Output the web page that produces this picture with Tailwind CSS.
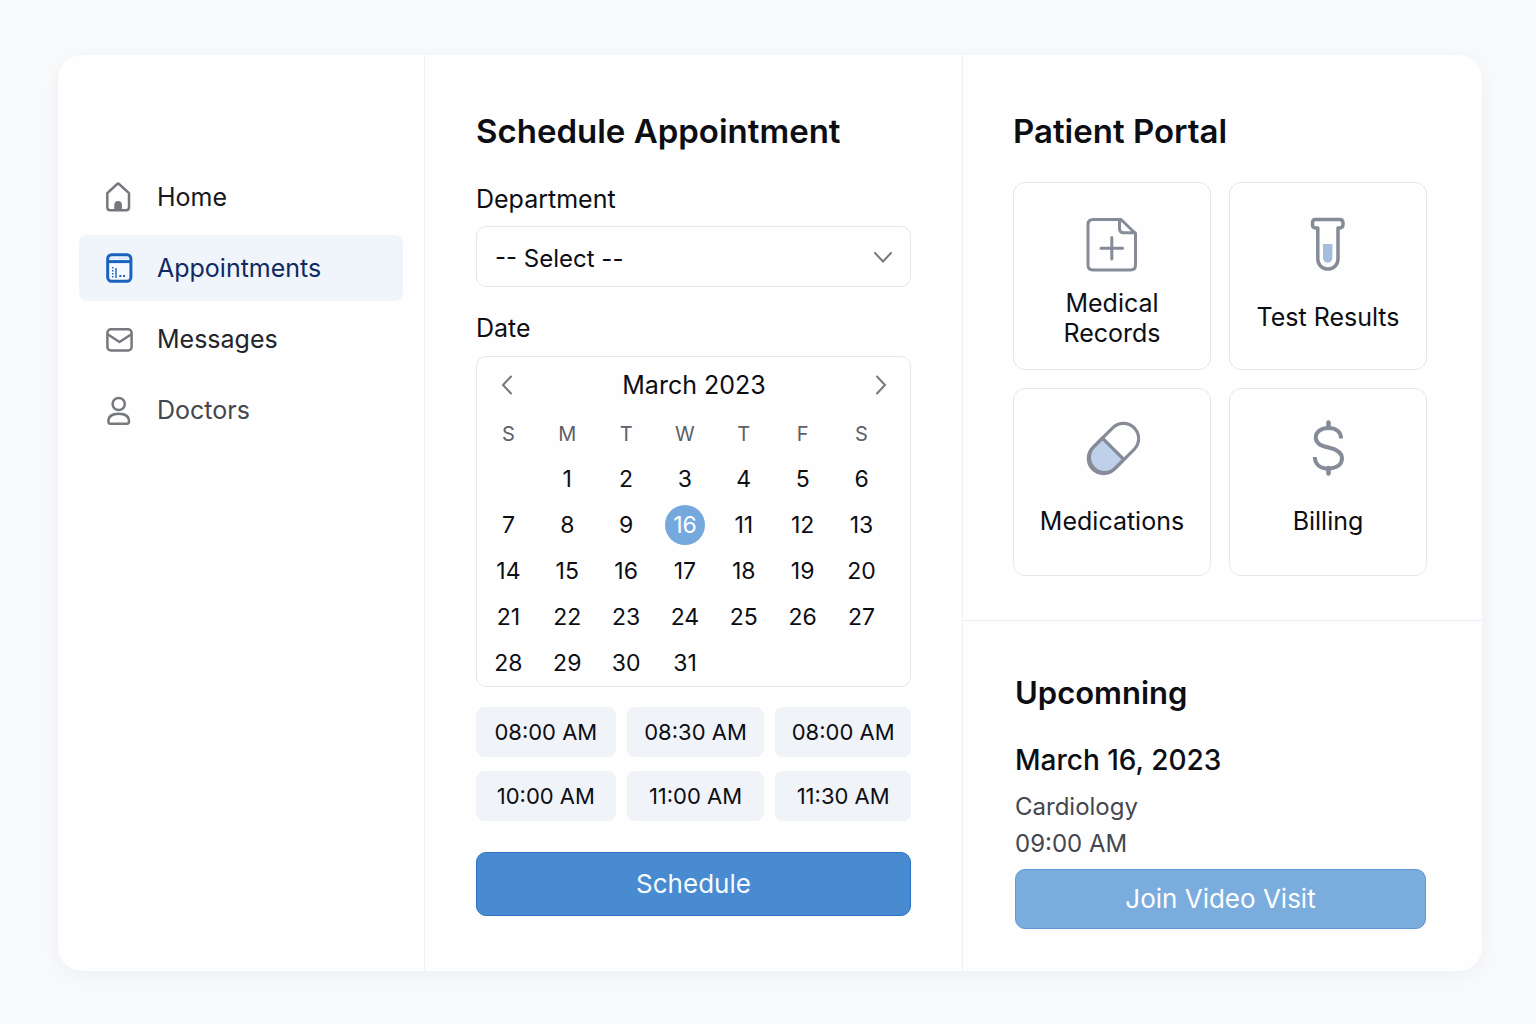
<!DOCTYPE html>
<html lang="en">
<head>
<meta charset="utf-8">
<meta name="viewport" content="width=device-width, initial-scale=1">
<title>Patient Portal</title>
<script src="https://cdn.jsdelivr.net/npm/@tailwindcss/browser@4"></script>
</head>
<body class="min-h-screen bg-[#f8fafc] pt-[55px] pr-[54px] pb-[53px] pl-[58px] font-['Inter',sans-serif] text-[25px] leading-8 text-[#0c0e14]">
<div class="grid rounded-3xl bg-[#fefefe] shadow-[0_4px_24px_rgba(15,35,60,0.05)] lg:grid-cols-[366fr_538fr_520fr]">

  <!-- Sidebar -->
  <nav aria-label="Main" class="flex flex-col gap-[5px] px-[21px] pt-[109px] pb-10">
    <a href="#" class="flex h-[66px] items-center gap-6 rounded-lg pl-[26px] text-[#16181d]">
      <svg class="h-[30px] w-7" viewBox="0 0 28 30" fill="none" stroke="#75787d" stroke-width="2.500" stroke-linejoin="round" aria-hidden="true"><path d="M2.300 11.200 12.200 2 Q13.100 1.200 14 2 L24 11.200 V25.300 Q24 28.300 21 28.300 H5.300 Q2.300 28.300 2.300 25.300 Z"/><path d="M9.300 28 V22.800 a3.800 3.800 0 0 1 7.600 0 V28 Z" fill="#75787d" stroke="none"/></svg>
      Home
    </a>
    <a href="#" aria-current="page" class="flex h-[66px] items-center gap-6 rounded-lg bg-[#f0f4fb] pl-[26px] text-[#0f2a63]">
      <svg class="h-[30px] w-7" viewBox="-1 0 28 30" fill="none" aria-hidden="true"><rect x="1.700" y="1.700" width="23.200" height="26.600" rx="4" fill="#f6f9fe" stroke="#1a62bd" stroke-width="3"/><path d="M2 8.600H25" stroke="#1a62bd" stroke-width="3"/><path d="M4.500 5.300H9.500M12 5.300H22" stroke="#dce9fa" stroke-width="2"/><path d="M6.700 14V25" stroke="#1a62bd" stroke-width="1.500" stroke-dasharray="1.500 1.500"/><path d="M10 15V25" stroke="#1a62bd" stroke-width="1.400"/><path d="M13.300 23H15.300M17 23H19" stroke="#1a62bd" stroke-width="2"/></svg>
      Appointments
    </a>
    <a href="#" class="flex h-[66px] items-center gap-6 rounded-lg pl-[26px] text-[#22252b]">
      <svg class="h-[30px] w-7" viewBox="-1 -4 28 30" fill="none" stroke="#75787d" stroke-width="2.500" stroke-linejoin="round" aria-hidden="true"><rect x="1.400" y="1.300" width="24.200" height="21.200" rx="3.500"/><path d="M2 6.500 L13.500 14 L25 6.500"/></svg>
      Messages
    </a>
    <a href="#" class="flex h-[66px] items-center gap-6 rounded-lg pl-[26px] text-[#44474d]">
      <svg class="h-[30px] w-7" viewBox="-1 0 28 30" fill="none" stroke="#75787d" stroke-width="2.500" stroke-linejoin="round" aria-hidden="true"><circle cx="12.700" cy="9" r="6.100"/><path d="M2.400 26.500 C2.400 21 6.500 18.700 12.700 18.700 S23 21 23 26.500 Q23 28.700 21 28.700 H4.400 Q2.400 28.700 2.400 26.500 Z"/></svg>
      Doctors
    </a>
  </nav>

  <!-- Scheduling -->
  <main class="border-l border-[#eef0f3] px-[51px] pt-[56px] pb-[55px]">
    <h1 class="text-[33px] leading-10 font-semibold whitespace-nowrap">Schedule Appointment</h1>
    <label for="department" class="mt-8 block">Department</label>
    <div class="relative mt-[11px]">
      <select id="department" class="h-[61px] w-full appearance-none rounded-[10px] border border-[#e4e6e9] bg-[#fefefe] px-[18px] pt-1 text-2xl">
        <option>-- Select --</option>
        <option>Cardiology</option>
      </select>
      <svg class="pointer-events-none absolute inset-y-0 right-[18px] my-auto h-3 w-5" viewBox="0 0 20 12" fill="none" stroke="#75787d" stroke-width="2" stroke-linecap="round" aria-hidden="true"><path d="M2 2 10 10.500 18 2"/></svg>
    </div>

    <h2 id="date-label" class="mt-[25px]">Date</h2>
    <section aria-labelledby="date-label" class="mt-3 rounded-[10px] border border-[#e4e6e9]">
      <div class="flex h-[55px] items-center justify-between pr-[23px] pl-[24px]">
        <button type="button" aria-label="Previous month"><svg class="h-5 w-3" viewBox="0 0 12 20" fill="none" stroke="#75787d" stroke-width="2" stroke-linecap="round"><path d="M10 1.500 2 10 10 18.500"/></svg></button>
        <span>March 2023</span>
        <button type="button" aria-label="Next month"><svg class="h-5 w-3" viewBox="0 0 12 20" fill="none" stroke="#75787d" stroke-width="2" stroke-linecap="round"><path d="M2 1.500 10 10 2 18.500"/></svg></button>
      </div>
      <div class="pr-[19px] pl-[2px]">
        <table class="w-full table-fixed text-center text-[23px] [&_td]:h-[46px] [&_td]:p-0 [&_th]:h-11 [&_th]:p-0 [&_th]:text-xl [&_th]:font-normal [&_th]:text-[#5c6067]">
          <thead><tr><th>S</th><th>M</th><th>T</th><th>W</th><th>T</th><th>F</th><th>S</th></tr></thead>
          <tbody>
            <tr><td></td><td><button type="button">1</button></td><td><button type="button">2</button></td><td><button type="button">3</button></td><td><button type="button">4</button></td><td><button type="button">5</button></td><td><button type="button">6</button></td></tr>
            <tr><td><button type="button">7</button></td><td><button type="button">8</button></td><td><button type="button">9</button></td><td><button type="button" aria-pressed="true" class="size-10 rounded-full bg-[#75a9dd] align-middle text-white">16</button></td><td><button type="button">11</button></td><td><button type="button">12</button></td><td><button type="button">13</button></td></tr>
            <tr><td><button type="button">14</button></td><td><button type="button">15</button></td><td><button type="button">16</button></td><td><button type="button">17</button></td><td><button type="button">18</button></td><td><button type="button">19</button></td><td><button type="button">20</button></td></tr>
            <tr><td><button type="button">21</button></td><td><button type="button">22</button></td><td><button type="button">23</button></td><td><button type="button">24</button></td><td><button type="button">25</button></td><td><button type="button">26</button></td><td><button type="button">27</button></td></tr>
            <tr><td><button type="button">28</button></td><td><button type="button">29</button></td><td><button type="button">30</button></td><td><button type="button">31</button></td><td></td><td></td><td></td></tr>
          </tbody>
        </table>
      </div>
    </section>

    <div class="mt-5 grid grid-cols-[140fr_138fr_136fr] gap-x-[11px] gap-y-[14px] text-[22px] whitespace-nowrap">
      <button type="button" class="h-[50px] rounded-lg bg-[#f0f3f8]">08:00 AM</button>
      <button type="button" class="h-[50px] rounded-lg bg-[#f0f3f8]">08:30 AM</button>
      <button type="button" class="h-[50px] rounded-lg bg-[#f0f3f8]">08:00 AM</button>
      <button type="button" class="h-[50px] rounded-lg bg-[#f0f3f8]">10:00 AM</button>
      <button type="button" class="h-[50px] rounded-lg bg-[#f0f3f8]">11:00 AM</button>
      <button type="button" class="h-[50px] rounded-lg bg-[#f0f3f8]">11:30 AM</button>
    </div>
    <button type="button" class="mt-[31px] h-16 w-full rounded-[10px] border border-[#2a72c4] bg-[#488bd0] text-[26px] text-[#f6fbff]">Schedule</button>
  </main>

  <!-- Portal -->
  <aside class="border-l border-[#eef0f3]">
    <section class="border-b border-[#e9ebee] pt-[56px] pr-[55px] pb-11 pl-[50px]">
      <h2 class="text-[33px] leading-10 font-semibold">Patient Portal</h2>
      <div class="mt-[31px] grid grid-cols-2 gap-[18px] text-center">
        <a href="#" class="flex h-[188px] flex-col items-center rounded-xl border border-[#e4e6e9] pt-[34px]">
          <svg class="size-14" viewBox="-1 0 56 56" fill="none" stroke="#868b98" stroke-width="3" stroke-linejoin="round" stroke-linecap="round" aria-hidden="true"><path d="M8 2.500 H36 L50.500 16.500 V48 Q50.500 53 45.500 53 H8 Q3 53 3 48 V7.500 Q3 2.500 8 2.500 Z"/><path d="M34.500 3 V11.500 Q34.500 15.800 38.800 15.800 H50"/><path d="M26.800 20.500 V42 M16 31.300 H37.600"/></svg>
          <span class="mt-[15px] leading-[30px]">Medical<br>Records</span>
        </a>
        <a href="#" class="flex h-[188px] flex-col items-center rounded-xl border border-[#e4e6e9] pt-[34px]">
          <svg class="size-14" viewBox="0 0 56 56" fill="none" stroke="#868b98" stroke-width="3.500" stroke-linejoin="round" aria-hidden="true"><path d="M15.400 2.600 H39.600 Q43 2.600 43 6 V7.600 Q43 11 39.600 11 H38 V42 A10.100 10.100 0 0 1 17.800 42 V11 H15.400 Q12.500 11 12.500 7.600 V6 Q12.500 2.600 15.400 2.600 Z"/><path d="M23 27 H32.400 V41 A4.700 4.700 0 0 1 23 41 Z" fill="#a6bddd" stroke="none"/></svg>
          <span class="mt-[29px] leading-[30px] whitespace-nowrap">Test Results</span>
        </a>
        <a href="#" class="flex h-[188px] flex-col items-center rounded-xl border border-[#e4e6e9] pt-[31px]">
          <svg class="size-14" viewBox="-2 0 56 56" fill="none" stroke="#868b98" stroke-width="3.200" aria-hidden="true"><g transform="rotate(-45 27.500 28.500)"><path d="M27 13.300 H15 A15.200 15.200 0 0 0 15 43.700 H27 Z" fill="#bfd1ea"/><rect x="-1.800" y="13.300" width="58.600" height="30.400" rx="15.200"/></g></svg>
          <span class="mt-[30px] leading-[30px]">Medications</span>
        </a>
        <a href="#" class="flex h-[188px] flex-col items-center rounded-xl border border-[#e4e6e9] pt-[31px]">
          <svg class="size-14" viewBox="0 0 56 56" fill="none" stroke="#868b98" stroke-width="4" aria-hidden="true"><path d="M41 18.500 C41 11.500 35.500 8 28.500 8 C21 8 15.800 12 15.800 17.500 C15.800 23 20 25.500 28.500 27.500 C37.500 29.500 42 32.500 42 38.500 C42 44.500 36.500 48.500 28.500 48.500 C20 48.500 15 44 14.800 37"/><path d="M28.500 2.500 V8 M28.500 48 V53.500" stroke-width="4.600" stroke-linecap="round"/></svg>
          <span class="mt-[30px] leading-[30px]">Billing</span>
        </a>
      </div>
    </section>
    <section class="pt-[52px] pr-[56px] pb-[42px] pl-[52px]">
      <h2 class="text-[31px] leading-10 font-semibold">Upcomning</h2>
      <h3 class="mt-[31px] text-[28px] font-medium">March 16, 2023</h3>
      <p class="mt-3 text-2xl leading-[37px] text-[#44474d]">Cardiology<br>09:00 AM</p>
      <button type="button" class="mt-[7px] h-[60px] w-full rounded-[10px] border border-[#5f98d4] bg-[#7aacde] text-[26px] text-white">Join Video Visit</button>
    </section>
  </aside>
</div>
</body>
</html>
